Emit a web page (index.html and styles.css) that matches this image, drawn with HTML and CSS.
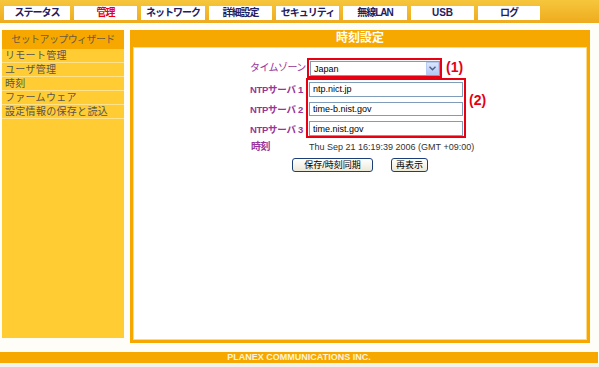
FILE: index.html
```html
<!DOCTYPE html>
<html lang="ja">
    <head>
        <meta charset="UTF-8" />
        <title>時刻設定</title>
        <link rel="stylesheet" href="styles.css">
    </head>
    <body>
        <div class="topnav">
            <a class="tab t1">ステータス</a>
            <a class="tab t2 active">管理</a>
            <a class="tab t3">ネットワーク</a>
            <a class="tab t4">詳細設定</a>
            <a class="tab t5">セキュリティ</a>
            <a class="tab t6">無線LAN</a>
            <a class="tab t7">USB</a>
            <a class="tab t8">ログ</a>
        </div>
        <div class="content">
            <div class="sidebar">
                <div class="side-head">セットアップウィザード</div>
                <div class="side-item">リモート管理</div>
                <div class="side-item">ユーザ管理</div>
                <div class="side-item">時刻</div>
                <div class="side-item">ファームウェア</div>
                <div class="side-item">設定情報の保存と読込</div>
            </div>
            <div class="panel">
                <div class="panel-head">時刻設定</div>
                <div class="panel-body">
                    <div class="form">
                        <div class="group">
                            <div class="labels">
                                <div class="label">タイムゾーン</div>
                            </div>
                            <div class="redbox box1">
                                <div class="select">
                                    <span>Japan</span>
                                    <span class="drop">
                                        <svg width="7" height="5" viewBox="0 0 7 5"><path d="M0.5 0.8 L3.5 3.8 L6.5 0.8" fill="none" stroke="#4d6185" stroke-width="1.4"/></svg>
                                    </span>
                                </div>
                            </div>
                            <div class="note note1">(1)</div>
                        </div>
                        <div class="group">
                            <div class="labels ntp-labels">
                                <div class="label ntp">NTPサーバ 1</div>
                                <div class="label ntp">NTPサーバ 2</div>
                                <div class="label ntp">NTPサーバ 3</div>
                            </div>
                            <div class="redbox box2">
                                <input type="text" value="ntp.nict.jp" />
                                <input type="text" value="time-b.nist.gov" />
                                <input type="text" value="time.nist.gov" />
                            </div>
                            <div class="note note2">(2)</div>
                        </div>
                        <div class="time-row">
                            <div class="label">時刻</div>
                            <div class="time">Thu Sep 21 16:19:39 2006 (GMT +09:00)</div>
                        </div>
                    </div>
                    <div class="buttons">
                        <button class="btn wide">保存/時刻同期</button>
                        <button class="btn">再表示</button>
                    </div>
                </div>
            </div>
        </div>
        <div class="footer">PLANEX COMMUNICATIONS INC.</div>
        <div class="bottom"></div>
    </body>
</html>
```

FILE: styles.css
```css
body {
    margin: 0;
    padding: 0;
    background-color: #fffdf7;
    font-family: "Liberation Sans", "Noto Sans CJK JP", sans-serif;
    font-size: 11px;
    color: #333;
}
.topnav {
    display: flex;
    gap: 4px;
    height: 23px;
    padding: 6px 0 0 4px;
    box-sizing: border-box;
    background: linear-gradient(#f6c63c, #efab1e);
}
.tab {
    display: block;
    height: 14px;
    line-height: 14px;
    background: #fff;
    text-align: center;
    font-weight: bold;
    font-size: 10px;
    letter-spacing: -1px;
    white-space: nowrap;
    color: #1e2060;
}
.tab.active {
    color: #e60012;
}
.t1 { width: 66px; }
.t2 { width: 63px; }
.t3 { width: 64px; }
.t4 { width: 63px; }
.t5 { width: 63px; }
.t6 { width: 64px; }
.t7 { width: 63px; letter-spacing: 0; }
.t8 { width: 62px; }
.content {
    display: flex;
    gap: 6px;
    padding: 7px 0 0 2px;
    height: 313px;
}
.sidebar {
    width: 122px;
    height: 308px;
    background: #ffcc33;
}
.side-head {
    height: 19px;
    line-height: 19px;
    background: #f7a800;
    text-align: center;
    font-size: 10px;
    letter-spacing: -0.6px;
    color: #6b5a40;
}
.side-item {
    height: 13px;
    line-height: 13px;
    padding-left: 3px;
    border-bottom: 1px solid #ffe28a;
    color: #555;
    font-size: 10px;
    letter-spacing: 0.3px;
    white-space: nowrap;
}
.panel {
    width: 460px;
    height: 313px;
    box-sizing: border-box;
    border: 3px solid #f7a800;
    border-top: none;
    background: #f7a800;
    display: flex;
    flex-direction: column;
}
.panel-head {
    height: 17px;
    line-height: 17px;
    text-align: center;
    color: #fff;
    font-weight: bold;
    font-size: 12px;
}
.panel-body {
    flex: 1;
    background: #fff;
    border: 1px solid #ffd98a;
}
.form {
    margin: 10px 0 0 116px;
}
.group {
    display: flex;
    align-items: flex-start;
}
.labels {
    width: 57px;
}
.ntp-labels {
    padding-top: 2px;
    margin-bottom: -2px;
}
.label {
    height: 20px;
    line-height: 20px;
    color: #993399;
    font-size: 10px;
    letter-spacing: -0.6px;
    white-space: nowrap;
}
.label.ntp {
    font-weight: bold;
    font-size: 9.5px;
    letter-spacing: -0.3px;
}
.redbox {
    border: 2px solid #e60012;
    box-sizing: border-box;
}
.box1 {
    width: 135px;
    height: 20px;
    padding: 1px 0 0 1px;
}
.box2 {
    width: 160px;
    height: 60px;
    margin-left: -1px;
    padding: 2px 0 0 1px;
    display: flex;
    flex-direction: column;
    gap: 5px;
}
.select {
    width: 130px;
    height: 15px;
    box-sizing: border-box;
    border: 1px solid #7f9db9;
    display: flex;
    align-items: center;
    justify-content: space-between;
    padding-left: 3px;
    font-size: 9px;
    color: #000;
}
.drop {
    width: 13px;
    height: 13px;
    box-sizing: border-box;
    border: 1px solid #b8cbf3;
    background: linear-gradient(#dbe6fd, #b5c9f6);
    display: flex;
    align-items: center;
    justify-content: center;
}
input {
    width: 154px;
    height: 15px;
    box-sizing: border-box;
    border: 1px solid #7f9db9;
    padding: 0 3px;
    margin: 0;
    font-family: "Liberation Sans", sans-serif;
    font-size: 9px;
    color: #000;
}
.note {
    color: #e60012;
    font-weight: bold;
    font-size: 14px;
    margin-left: 4px;
}
.note1 {
    line-height: 18px;
}
.note2 {
    margin-left: 3px;
    padding-top: 14px;
}
.time-row {
    display: flex;
    height: 18px;
    line-height: 18px;
}
.time-row .label {
    width: 57px;
    height: 18px;
    line-height: 18px;
    font-weight: bold;
    padding-left: 1px;
}
.time {
    color: #333;
    font-size: 9px;
    padding-left: 1px;
}
.buttons {
    display: flex;
    justify-content: center;
    gap: 18px;
    margin-top: 2px;
}
.btn {
    height: 14px;
    padding: 0;
    border: 1px solid #1c3f78;
    border-radius: 3px;
    background: linear-gradient(#ffffff, #ece9d8);
    font-family: "Liberation Sans", "Noto Sans CJK JP", sans-serif;
    font-size: 9px;
    line-height: 12px;
    color: #000;
    width: 37px;
}
.btn.wide {
    width: 81px;
}
.footer {
    margin-top: 9px;
    width: 598px;
    height: 11px;
    line-height: 11px;
    background: #f7a800;
    color: #fff4d8;
    font-weight: bold;
    font-size: 9px;
    text-align: center;
}
.bottom {
    height: 4px;
    background: #f3f2ec;
}
```
